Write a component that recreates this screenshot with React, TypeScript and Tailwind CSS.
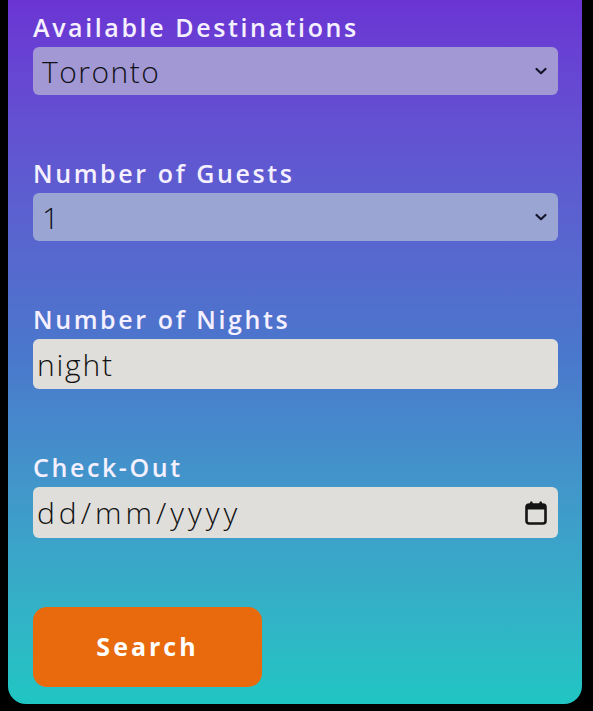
import React from "react";

const Chevron = () => (
  <svg width="14" height="10" viewBox="0 0 14 10" className="shrink-0">
    <path d="M2.5 3 L7 7.2 L11.5 3" fill="none" stroke="#14142a" strokeWidth="2.2" strokeLinecap="round" strokeLinejoin="round" />
  </svg>
);

const CalendarIcon = () => (
  <svg width="24" height="26" viewBox="0 0 24 26" className="shrink-0">
    <rect x="2.5" y="4.5" width="19" height="19" rx="2.5" fill="none" stroke="#141414" strokeWidth="2.6" />
    <rect x="2.5" y="4.5" width="19" height="5" fill="#141414" />
    <rect x="6" y="1.5" width="2.6" height="5" rx="1" fill="#141414" />
    <rect x="15.4" y="1.5" width="2.6" height="5" rx="1" fill="#141414" />
  </svg>
);

const labelCls =
  "block text-[25px] leading-[30px] font-semibold tracking-[2.6px] text-[#f5f0ff] mb-[5px]";

export default function App() {
  return (
    <div
      className="min-h-[711px] w-full bg-black"
      style={{ fontFamily: "'Open Sans', Lato, sans-serif" }}
    >
      <div className="ml-[8px] w-[574px] rounded-b-[18px] bg-gradient-to-b from-[#6b34d4] via-[#4a77cc] to-[#1fc6c3] pl-[25px] pr-[24px] pt-[12px] pb-[17px]">
        <div className="mb-[63px]">
          <label className={labelCls}>Available Destinations</label>
          <div className="flex h-[48px] items-center justify-between rounded-[6px] bg-[#a198d4] pl-[9px] pr-[10px]">
            <span className="text-[30px] font-light tracking-[1.5px] text-[#111118]">Toronto</span>
            <Chevron />
          </div>
        </div>
        <div className="mb-[63px]">
          <label className={labelCls}>Number of Guests</label>
          <div className="flex h-[48px] items-center justify-between rounded-[6px] bg-[#9aa5d3] pl-[9px] pr-[10px]">
            <span className="text-[30px] font-light tracking-[1.5px] text-[#111118]">1</span>
            <Chevron />
          </div>
        </div>
        <div className="mb-[63px]">
          <label className={labelCls}>Number of Nights</label>
          <div className="flex h-[50px] items-center rounded-[6px] bg-[#e0dedb] pl-[4px]">
            <span className="text-[30px] font-light tracking-[1.8px] text-[#111]">night</span>
          </div>
        </div>
        <div className="mb-[69px]">
          <label className={labelCls}>Check-Out</label>
          <div className="flex h-[51px] items-center justify-between rounded-[6px] bg-[#e0dedb] pl-[4px] pr-[10px]">
            <span className="text-[30px] font-light tracking-[4px] text-[#111]">dd/mm/yyyy</span>
            <CalendarIcon />
          </div>
        </div>
        <button className="flex h-[80px] w-[229px] items-center justify-center rounded-[14px] bg-[#e86a0c] text-[25px] font-bold tracking-[3px] text-white">
          Search
        </button>
      </div>
    </div>
  );
}
